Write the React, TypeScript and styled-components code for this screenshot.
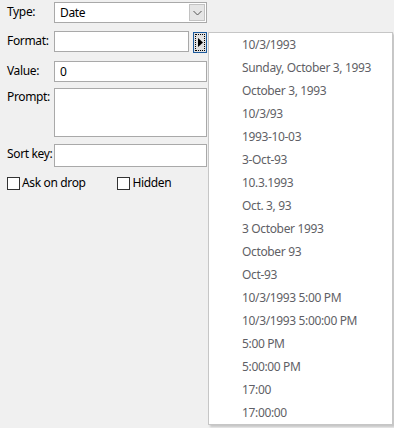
import * as React from 'react';
import styled, { createGlobalStyle } from 'styled-components';

const Global = createGlobalStyle`
    html, body {
        margin: 0;
        padding: 0;
        background: #f0f0f0;
    }
    body {
        font-family: "Noto Sans", "Segoe UI", sans-serif;
        font-size: 12px;
        letter-spacing: -0.35px;
        color: #000;
    }
`;

const Dialog = styled.div`
    position: relative;
    width: 394px;
    height: 428px;
    overflow: hidden;
    background: #f0f0f0;
`;

const Form = styled.div`
    display: flex;
    flex-direction: column;
    width: 207px;
    padding: 2px 0 0 7px;
    box-sizing: border-box;
`;

const Row = styled.div<{ $top?: number }>`
    display: grid;
    grid-template-columns: 47px 1fr;
    align-items: start;
    margin-top: ${({ $top }) => $top ?? 0}px;
`;

const Label = styled.label<{ $pad?: number }>`
    line-height: 16px;
    padding-top: ${({ $pad }) => $pad ?? 2}px;
    white-space: nowrap;
`;

const Field = styled.div<{ $h?: number }>`
    box-sizing: border-box;
    height: ${({ $h }) => $h ?? 21}px;
    background: #fff;
    border: 1px solid #a9a9a9;
    padding: 1px 0 0 5px;
    line-height: 17px;
`;

const Combo = styled(Field)`
    display: flex;
    align-items: center;
    justify-content: space-between;
    padding: 0 1px 0 5px;
`;

const ComboButton = styled.div`
    box-sizing: border-box;
    width: 16px;
    height: 17px;
    background: #e5e5e5;
    border: 1px solid #c2c2c2;
    display: flex;
    align-items: center;
    justify-content: center;
`;

const FormatLine = styled.div`
    display: flex;
    align-items: flex-start;
    gap: 4px;
`;

const FormatInput = styled(Field)`
    flex: 0 0 135px;
`;

const ArrowButton = styled.div`
    box-sizing: border-box;
    width: 14px;
    height: 21px;
    margin-top: 1px;
    border: 1px solid #1c5a9c;
    background: #e1e1e1;
    padding: 1px;
`;

const FocusRect = styled.div`
    box-sizing: border-box;
    width: 100%;
    height: 100%;
    border: 1px dotted #000;
    display: flex;
    align-items: center;
    justify-content: center;
`;

const Checks = styled.div`
    display: flex;
    align-items: center;
    margin-top: 8px;
`;

const Check = styled.label<{ $w: number }>`
    display: flex;
    align-items: center;
    gap: 2px;
    width: ${({ $w }) => $w}px;
    line-height: 16px;
`;

const Box = styled.span`
    box-sizing: border-box;
    width: 13px;
    height: 13px;
    background: #fff;
    border: 1px solid #333;
`;

const Menu = styled.ul`
    position: absolute;
    left: 208px;
    top: 32px;
    width: 185px;
    margin: 0;
    padding: 0;
    list-style: none;
    box-sizing: border-box;
    background: #fff;
    border: 1px solid #c6c6c6;
    box-shadow: 2px 2px 2px rgba(0, 0, 0, 0.18);
`;

const Item = styled.li`
    height: 23px;
    line-height: 23px;
    padding-left: 33px;
    color: #5f5f66;
    white-space: nowrap;
`;

const formats = [
    '10/3/1993',
    'Sunday, October 3, 1993',
    'October 3, 1993',
    '10/3/93',
    '1993-10-03',
    '3-Oct-93',
    '10.3.1993',
    'Oct. 3, 93',
    '3 October 1993',
    'October 93',
    'Oct-93',
    '10/3/1993 5:00 PM',
    '10/3/1993 5:00:00 PM',
    '5:00 PM',
    '5:00:00 PM',
    '17:00',
    '17:00:00',
];

export default function App() {
    return (
        <Dialog>
            <Global />
            <Form>
                <Row>
                    <Label>Type:</Label>
                    <Combo>
                        <span>Date</span>
                        <ComboButton>
                            <svg width="9" height="6" viewBox="0 0 9 6" fill="none" stroke="#555" strokeWidth="1">
                                <path d="M0.5,1 L4.5,5 L8.5,1" />
                            </svg>
                        </ComboButton>
                    </Combo>
                </Row>
                <Row $top={8}>
                    <Label>Format:</Label>
                    <FormatLine>
                        <FormatInput />
                        <ArrowButton>
                            <FocusRect>
                                <svg width="5" height="9" viewBox="0 0 5 9">
                                    <path d="M0,0 L5,4.5 L0,9 Z" fill="#000" />
                                </svg>
                            </FocusRect>
                        </ArrowButton>
                    </FormatLine>
                </Row>
                <Row $top={8}>
                    <Label>Value:</Label>
                    <Field>0</Field>
                </Row>
                <Row $top={6}>
                    <Label $pad={1}>Prompt:</Label>
                    <Field $h={49} />
                </Row>
                <Row $top={7}>
                    <Label>Sort key:</Label>
                    <Field $h={23} />
                </Row>
                <Checks>
                    <Check $w={111}>
                        <Box />
                        Ask on drop
                    </Check>
                    <Check $w={90}>
                        <Box />
                        Hidden
                    </Check>
                </Checks>
            </Form>
            <Menu>
                {formats.map(f => (
                    <Item key={f}>{f}</Item>
                ))}
            </Menu>
        </Dialog>
    );
}
